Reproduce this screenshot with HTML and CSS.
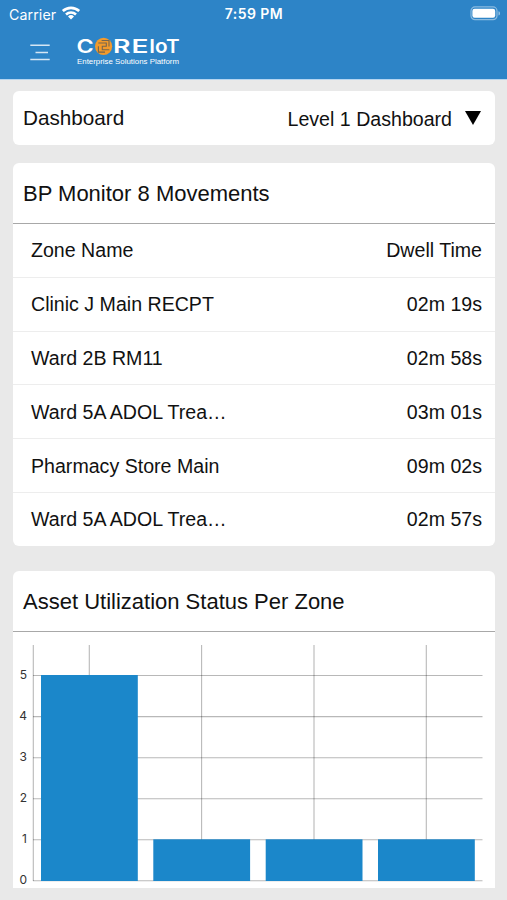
FILE: index.html
```html
<!DOCTYPE html>
<html lang="en">
<head>
<meta charset="utf-8">
<title>CoreIoT Dashboard</title>
<link rel="stylesheet" href="styles.css">
</head>
<body>
<header class="app-header">
  <div class="status-bar">
    <div class="carrier">
      <span class="carrier-name">Carrier</span>
      <svg class="wifi" width="20" height="16" viewBox="0 0 20 16" fill="none" stroke="#fff" stroke-width="2.7">
        <path d="M1.8 6.1a12.2 12.2 0 0 1 16.4 0M5 9.4a7.6 7.6 0 0 1 10 0"/>
        <path d="M10 14.4 7 11.4a4.4 4.4 0 0 1 6 0z" fill="#fff" stroke="none"/>
      </svg>
    </div>
    <span class="time">7:59 PM</span>
    <svg class="battery" width="32" height="15" viewBox="0 0 32 15">
      <rect x="2" y=".9" width="26" height="12.8" rx="4" fill="none" stroke="#fff" stroke-opacity=".45" stroke-width="1.2"/>
      <rect x="3.4" y="2.8" width="22.8" height="9" rx="2.2" fill="#fff"/>
      <path d="M29.5 5.2c2 .6 2 3.8 0 4.4z" fill="#fff" fill-opacity=".5"/>
    </svg>
  </div>
  <div class="nav-bar">
    <svg class="menu" width="20" height="17" viewBox="0 0 20 17" stroke="#fff" stroke-opacity=".8" stroke-width="1.5">
      <path d="M.3 1.2h19.4M5.5 8.5h12.5M.3 15.5h19.4"/>
    </svg>
    <svg class="logo" width="104" height="28" viewBox="0 0 104 28">
      <g class="logo-word">
        <text x="-.6" y="15" textLength="17.2" lengthAdjust="spacingAndGlyphs">C</text>
        <text x="36" y="15" textLength="17.5" lengthAdjust="spacingAndGlyphs">R</text>
        <text x="54.4" y="15" textLength="17" lengthAdjust="spacingAndGlyphs">E</text>
        <text x="72.2" y="15" textLength="30.4" lengthAdjust="spacingAndGlyphs">IoT</text>
      </g>
      <circle cx="26.6" cy="8.3" r="8.6" fill="#f39a2b"/>
      <path d="M21.3 5h8v3.3h-4v3.5h7M24.6 2.5h7.4v6M21.4 8.3v5.8h6.6" fill="none" stroke="#76664f" stroke-width="1.1"/>
      <text class="logo-tagline" x="0" y="26.3" textLength="102" lengthAdjust="spacingAndGlyphs">Enterprise Solutions Platform</text>
    </svg>
  </div>
</header>
<main class="content">
  <section class="card picker">
    <span class="picker-label">Dashboard</span>
    <span class="picker-value">Level 1 Dashboard
      <svg class="caret" width="16" height="14" viewBox="0 0 16 14"><path d="M0 0h16L8 14z"/></svg>
    </span>
  </section>
  <section class="card movements">
    <h2 class="card-title">BP Monitor 8 Movements</h2>
    <div class="row"><span>Zone Name</span><span>Dwell Time</span></div>
    <div class="row"><span>Clinic J Main RECPT</span><span>02m 19s</span></div>
    <div class="row"><span>Ward 2B RM11</span><span>02m 58s</span></div>
    <div class="row"><span>Ward 5A ADOL Trea…</span><span>03m 01s</span></div>
    <div class="row"><span>Pharmacy Store Main</span><span>09m 02s</span></div>
    <div class="row"><span>Ward 5A ADOL Trea…</span><span>02m 57s</span></div>
  </section>
  <section class="card utilization">
    <h2 class="card-title">Asset Utilization Status Per Zone</h2>
    <svg class="chart" width="482" height="256" viewBox="0 0 482 256">
      <g class="grid">
        <path d="M20 43.5h449.5M20 84.6h449.5M20 125.7h449.5M20 166.7h449.5M20 207.8h449.5M20 248.8h449.5"/>
        <path d="M20.3 13v236M76.3 13v236M188.6 13v236M301 13v236M413.3 13v236"/>
      </g>
      <g class="bars">
        <rect x="28" y="43" width="96.8" height="206"/>
        <rect x="140.3" y="207.3" width="96.8" height="41.7"/>
        <rect x="252.7" y="207.3" width="96.8" height="41.7"/>
        <rect x="365" y="207.3" width="96.8" height="41.7"/>
      </g>
      <g class="ticks">
        <text x="14" y="47">5</text>
        <text x="14" y="88">4</text>
        <text x="14" y="129">3</text>
        <text x="14" y="170">2</text>
        <text x="14" y="211">1</text>
        <text x="14" y="252">0</text>
      </g>
    </svg>
  </section>
</main>
</body>
</html>
```
FILE: styles.css
```css
* { box-sizing: border-box; }

body {
  margin: 0;
  height: 900px;
  overflow: hidden;
  background: #e9e9e9;
  color: #111;
  font-family: "Liberation Sans", Arial, sans-serif;
}

.app-header {
  height: 80px;
  background: #2d84c7;
  border-bottom: 1px solid #b5d5f0;
  color: #fff;
}

.status-bar {
  display: grid;
  grid-template-columns: 1fr auto 1fr;
  align-items: center;
  height: 28px;
  padding: 0 6px 0 9px;
  font-family: Inter, sans-serif;
}

.carrier { display: flex; align-items: center; gap: 6px; }
.carrier-name { font-size: 14.2px; letter-spacing: 0.1px; }
.wifi { margin: -3px 0 0 -1px; }
.time { margin: -1px 2px 0 0; font-size: 14px; font-weight: 600; letter-spacing: 0.45px; }
.battery { justify-self: end; margin-top: -1px; }

.nav-bar { display: flex; align-items: flex-start; padding: 10px 0 0 30px; }
.menu { margin-top: 6px; }
.logo { margin-left: 27px; overflow: visible; }

.logo-word {
  fill: #fff;
  font-family: Inter, sans-serif;
  font-size: 18.6px;
  font-weight: 600;
}

.logo-tagline { fill: #fff; font-size: 7.3px; }

.content { padding: 11px 12px 0 13px; }

.card { background: #fff; border-radius: 6px; }

.picker {
  display: flex;
  justify-content: space-between;
  align-items: center;
  height: 54px;
  padding: 0 14px 0 10px;
}

.picker-label { font-size: 20.7px; }

.picker-value {
  display: flex;
  align-items: center;
  gap: 13px;
  padding-top: 2px;
  font-size: 19.6px;
}

.caret { margin-top: -2px; }

.movements { margin-top: 18px; overflow: hidden; }

.card-title {
  display: flex;
  align-items: center;
  height: 61px;
  margin: 0;
  padding: 2px 10px 0;
  border-bottom: 1px solid #a8a8a8;
  font-size: 22px;
  font-weight: 400;
}

.row {
  display: flex;
  justify-content: space-between;
  align-items: center;
  height: 53.8px;
  padding: 1px 13px 0 18px;
  border-bottom: 1.5px solid #ededed;
  font-size: 19.6px;
}

.row:last-child { height: 53px; border-bottom: 0; }

.utilization { margin-top: 25px; border-radius: 6px 6px 0 0; }

.chart { display: block; }
.grid { stroke: #000; stroke-opacity: 0.28; stroke-width: 1.1; }
.bars { fill: #1b87ca; }

.ticks {
  fill: #333;
  font-family: Inter, sans-serif;
  font-size: 12px;
  text-anchor: end;
}
```
